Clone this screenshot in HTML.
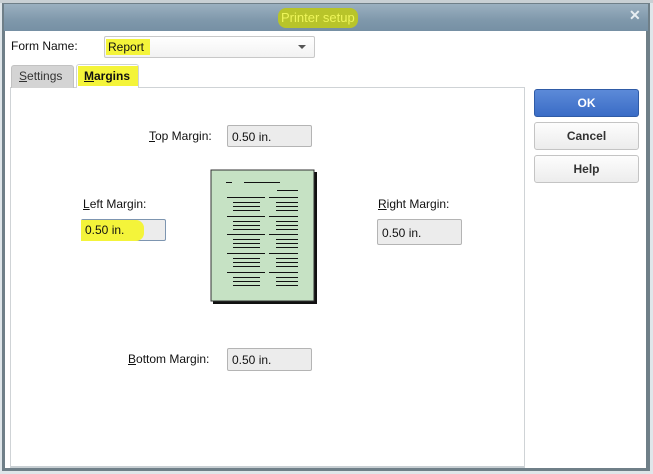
<!DOCTYPE html>
<html><head><meta charset="utf-8"><style>
*{margin:0;padding:0;box-sizing:border-box}
body{width:653px;height:474px;overflow:hidden;background:#dfe6ea;font-family:"Liberation Sans",Arial,sans-serif;font-size:12px;color:#111;position:relative}
.a{position:absolute}
.frame{left:2px;top:3px;width:648px;height:468px;background:#6f7f88}
.title{left:4px;top:4px;width:644px;height:27px;background:linear-gradient(#9bb0c0,#7f98ab 60%,#7690a4)}
.client{left:5px;top:31px;width:641px;height:437px;background:#fff}
.hl{background:#f4f43a}
.box{background:#ececec;border:1px solid #b4b4b4;border-radius:2px;padding:4px 0 0 4px;font-size:12px}
.btn{left:534px;width:105px;height:28px;border:1px solid #c4c4c4;border-radius:3px;background:linear-gradient(#fdfdfd,#ececec);text-align:center;font-weight:bold;line-height:26px;color:#333}
u{text-decoration:underline}
</style></head><body>
<div class="a" style="left:0;top:0;width:653px;height:3px;background:#c9d0d4"></div>
<div class="a frame"></div>
<div class="a title"></div>
<div class="a hl" style="left:278px;top:8px;width:80px;height:20px;border-radius:8px;background:#b8c42a"></div>
<div class="a" style="left:281px;top:10px;font-size:13px;color:#eef55a">Printer setup</div>
<div class="a" style="left:629px;top:7px;color:#e8eef2;font-size:14px;font-weight:bold">✕</div>
<div class="a client"></div>
<div class="a" style="left:11px;top:39px;font-size:12px">Form Name:</div>
<div class="a" style="left:104px;top:36px;width:211px;height:22px;border:1px solid #c8c8c8;border-radius:2px;background:linear-gradient(#fff,#f2f2f2)"></div>
<div class="a hl" style="left:106px;top:39px;width:44px;height:16px"></div>
<div class="a" style="left:108px;top:40px">Report</div>
<div class="a" style="left:298px;top:45px;width:0;height:0;border-left:4px solid transparent;border-right:4px solid transparent;border-top:4px solid #555"></div>
<div class="a" style="left:10px;top:87px;width:515px;height:381px;border:1px solid #cfd3d6;border-bottom:2px solid #c8cfd3"></div>
<div class="a" style="left:11px;top:65px;width:63px;height:23px;background:#d4d4d4;border:1px solid #c2c2c2;border-bottom:none;border-radius:3px 3px 0 0"></div>
<div class="a" style="left:19px;top:69px;color:#333"><u>S</u>ettings</div>
<div class="a" style="left:76px;top:64px;width:63px;height:24px;background:#fff;border:1px solid #cfd3d6;border-bottom:none;border-radius:3px 3px 0 0"></div>
<div class="a hl" style="left:78px;top:66px;width:60px;height:20px"></div>
<div class="a" style="left:84px;top:69px;font-weight:bold"><u>M</u>argins</div>
<div class="a btn" style="top:89px;background:linear-gradient(#5c8ad8,#3a6cc6);border-color:#2f5ba6;color:#fff">OK</div>
<div class="a btn" style="top:122px">Cancel</div>
<div class="a btn" style="top:155px">Help</div>
<div class="a" style="left:149px;top:129px"><u>T</u>op Margin:</div>
<div class="a box" style="left:227px;top:125px;width:85px;height:22px">0.50 in.</div>
<div class="a" style="left:83px;top:197px"><u>L</u>eft Margin:</div>
<div class="a box" style="left:81px;top:219px;width:85px;height:22px;background:#ececec;border-color:#7d95b0"></div>
<div class="a hl" style="left:81px;top:220px;width:63px;height:21px;border-radius:0 8px 8px 0"></div>
<div class="a" style="left:85px;top:223px">0.50 in.</div>
<div class="a" style="left:378px;top:197px"><u>R</u>ight Margin:</div>
<div class="a box" style="left:377px;top:219px;width:85px;height:26px;padding-top:6px">0.50 in.</div>
<div class="a" style="left:128px;top:352px"><u>B</u>ottom Margin:</div>
<div class="a box" style="left:227px;top:348px;width:85px;height:23px">0.50 in.</div>
<svg class="a" style="left:0;top:0" width="653" height="474">
<rect x="213" y="172" width="104" height="132" fill="#111"/>
<rect x="211" y="170" width="103" height="131" fill="#c6e2c4" stroke="#333" stroke-width="1"/>
<g stroke="#111" stroke-width="1">
<line x1="226" y1="182.5" x2="232" y2="182.5"/><line x1="244" y1="182.5" x2="280" y2="182.5"/>
<line x1="277" y1="190.5" x2="298" y2="190.5"/>
<g id="g"><line x1="227" y1="197.5" x2="265" y2="197.5"/><line x1="269" y1="197.5" x2="298" y2="197.5"/>
<line x1="233" y1="202.5" x2="260" y2="202.5"/><line x1="276" y1="202.5" x2="298" y2="202.5"/>
<line x1="233" y1="206.5" x2="260" y2="206.5"/><line x1="276" y1="206.5" x2="298" y2="206.5"/>
<line x1="233" y1="210.5" x2="260" y2="210.5"/><line x1="276" y1="210.5" x2="298" y2="210.5"/></g>
<use href="#g" y="19"/><use href="#g" y="37"/><use href="#g" y="56"/><use href="#g" y="75"/>
</g></svg>
</body></html>
